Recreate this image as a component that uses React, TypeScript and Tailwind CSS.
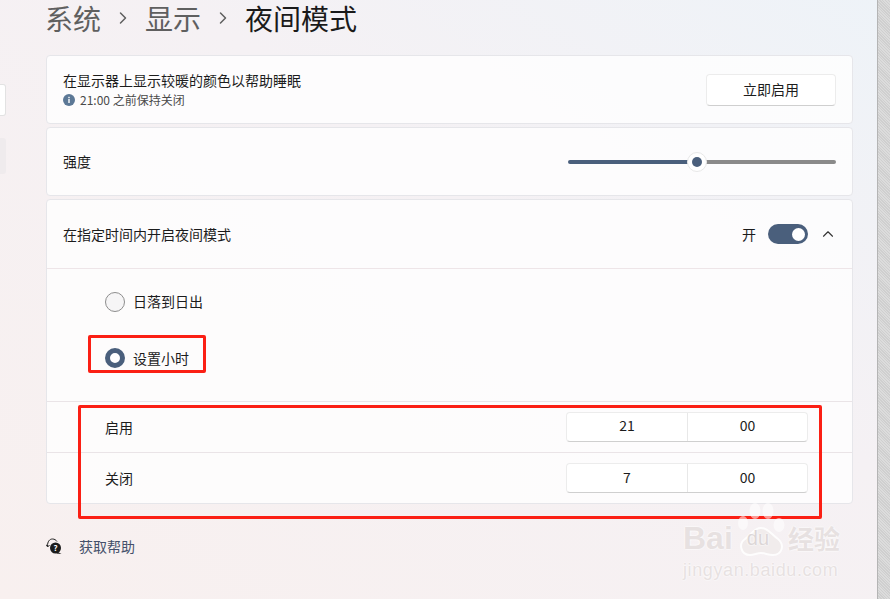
import { ChevronRight, ChevronUp } from "lucide-react"

const font = { fontFamily: '"Noto Sans CJK SC", "Liberation Sans", sans-serif' }

function TimeRow({ label, hour, minute, last }: { label: string; hour: string; minute: string; last?: boolean }) {
  return (
    <div className={`h-[51px] flex items-center justify-between pl-[58px] pr-[44px] ${last ? "" : "border-b border-[#eae4e7]"}`}>
      <span className="text-sm leading-[20px] pb-[1px] text-[#1c1c1c]">{label}</span>
      <div className="w-[242px] h-[30px] mt-[-1px] flex bg-white rounded-[4px] border border-[#ececec] border-b-[#cfcfcf] text-sm leading-[20px] text-[#1c1c1c]">
        <div className="w-[121px] pb-[3px] flex items-center justify-center border-r border-[#e8e8e8]">{hour}</div>
        <div className="flex-1 pb-[3px] flex items-center justify-center">{minute}</div>
      </div>
    </div>
  )
}

export default function App() {
  return (
    <div
      className="relative w-[890px] h-[599px] overflow-hidden flex bg-gradient-to-bl from-[#eef3f8] via-[#f5f1f4] via-40% to-[#f8f0ef]"
      style={font}
    >
      {/* Sidebar edge */}
      <div className="w-[46px] shrink-0 pt-[84px]">
        <div className="w-[6px] h-[32px] bg-white border border-l-0 border-[#e2e2e2] rounded-r-[3px]" />
        <div className="w-[6px] h-[36px] mt-[22px] bg-[#efebed] rounded-r-[3px]" />
      </div>

      <div className="w-[807px] shrink-0">
        {/* Breadcrumb */}
        <div className="h-[55px] pb-[19px] flex items-center text-[28px] leading-[36px]">
          <span className="text-[#5f5f5f] ml-[-1px]">系统</span>
          <ChevronRight className="w-[20px] h-[20px] mx-[12px] text-[#5f5f5f]" strokeWidth={1.8} />
          <span className="text-[#5f5f5f]">显示</span>
          <ChevronRight className="w-[20px] h-[20px] mx-[12px] text-[#5f5f5f]" strokeWidth={1.8} />
          <span className="text-[#1a1a1a]">夜间模式</span>
        </div>

        <div className="flex flex-col gap-[3px]">
          {/* Warm colours */}
          <div className="h-[69px] flex items-center justify-between pl-[16px] pr-[16px] bg-white/80 border border-[#e6e6ea] rounded-[4px]">
            <div>
              <div className="text-sm leading-[20px] text-[#1c1c1c]">在显示器上显示较暖的颜色以帮助睡眠</div>
              <div className="flex items-center gap-[5px] h-[20px] text-xs text-[#4a4a4a]">
                <svg width="12" height="12" viewBox="0 0 12 12">
                  <circle cx="6" cy="6" r="6" fill="#5c7896" />
                  <rect x="5.3" y="5" width="1.4" height="4" fill="#fff" />
                  <rect x="5.3" y="2.8" width="1.4" height="1.4" fill="#fff" />
                </svg>
                <span>21:00 之前保持关闭</span>
              </div>
            </div>
            <button className="w-[130px] h-[32px] pb-[1px] bg-white border border-[#ececec] border-b-[#cfcfcf] rounded-[4px] text-sm text-[#1c1c1c]">
              立即启用
            </button>
          </div>

          {/* Strength */}
          <div className="h-[69px] flex items-center justify-between pl-[16px] pr-[16px] bg-white/80 border border-[#e6e6ea] rounded-[4px]">
            <span className="text-sm leading-[20px] pb-[1px] text-[#1c1c1c]">强度</span>
            <div className="relative w-[268px] h-[4px] flex rounded-full overflow-visible">
              <div className="w-[129px] bg-[#4a5f7c] rounded-l-full" />
              <div className="flex-1 bg-[#8a8a8a] rounded-r-full" />
              <div className="absolute left-[119px] top-[-8px] w-[20px] h-[20px] rounded-full bg-white border border-[#e8e8e8] flex items-center justify-center">
                <div className="w-[10px] h-[10px] rounded-full bg-[#4a5f7c]" />
              </div>
            </div>
          </div>

          {/* Schedule */}
          <div className="h-[305px] bg-white/80 border border-[#e6e6ea] rounded-[4px]">
            <div className="h-[69px] flex items-center justify-between pl-[16px] pr-[15px] border-b border-[#eee5e8]">
              <span className="text-sm leading-[20px] text-[#1c1c1c]">在指定时间内开启夜间模式</span>
              <div className="flex items-center">
                <span className="text-sm leading-[20px] text-[#1c1c1c] mr-[12px]">开</span>
                <div className="w-[40px] h-[20px] rounded-full bg-[#4a5f7c] flex items-center justify-end pr-[3px]">
                  <div className="w-[13px] h-[13px] rounded-full bg-white" />
                </div>
                <ChevronUp className="w-[18px] h-[18px] ml-[11px] text-[#333]" strokeWidth={1.5} />
              </div>
            </div>
            <div className="h-[133px] pl-[58px] border-b border-[#eae4e7]">
              <div className="h-[66px] flex items-center gap-[8px]">
                <div className="w-[20px] h-[20px] rounded-full bg-[#f6f5f6] border border-[#8d8d8d]" />
                <span className="text-sm leading-[20px] pb-[3px] text-[#1c1c1c]">日落到日出</span>
              </div>
              <div className="h-[47px] mt-[-1px] flex items-center gap-[8px]">
                <div className="w-[20px] h-[20px] rounded-full bg-white border-[5px] border-[#4a5f7c]" />
                <span className="text-sm leading-[20px] text-[#1c1c1c]">设置小时</span>
              </div>
            </div>
            <TimeRow label="启用" hour="21" minute="00" />
            <TimeRow label="关闭" hour="7" minute="00" last />
          </div>
        </div>

        {/* Help */}
        <div className="mt-[32px] flex items-center gap-[17px]">
          <svg width="16" height="17" viewBox="0 0 16 17">
            <path d="M1.5 8 C1.5 3.5 3.5 1 6.5 1 C8.5 1 10 2 11 3.5" fill="none" stroke="#222" strokeWidth="1" />
            <path d="M0 6.5 L1.7 9 L3.5 7" fill="none" stroke="#222" strokeWidth="1" />
            <circle cx="9.5" cy="10" r="5.5" fill="#1c1c1c" />
            <path d="M12 14 L15.5 16 L10.5 15.5 Z" fill="#1c1c1c" />
            <text x="9.5" y="13" textAnchor="middle" fontSize="8" fontWeight="700" fill="#fff">?</text>
          </svg>
          <span className="text-sm leading-[20px] text-[#44506a]">获取帮助</span>
        </div>
      </div>

      {/* Right window edge */}
      <div className="ml-auto w-[13px] shrink-0 border-l border-[#b4b4b4] bg-[repeating-linear-gradient(45deg,#cfcfcf_0px,#cfcfcf_1px,#dcdcdc_1px,#dcdcdc_2px)]" />

      {/* Red annotation boxes */}
      <div className="absolute left-[88px] top-[335px] w-[118px] h-[38px] border-[3px] border-[#fb1f14] rounded-[2px]" />
      <div className="absolute left-[78px] top-[405px] w-[744px] h-[114px] border-[3px] border-[#fb1f14] rounded-[2px]" />

      {/* Watermark */}
      <div className="absolute left-[683px] top-[503px] w-[162px] leading-none" style={{ fontFamily: '"Liberation Sans", "Noto Sans CJK SC", sans-serif' }}>
        <svg className="absolute left-[55px] top-0" width="48" height="54" viewBox="0 0 48 54">
          <g fill="#ffffff" fillOpacity="0.55">
            <ellipse cx="5" cy="20" rx="5" ry="7" />
            <ellipse cx="17" cy="8" rx="5.5" ry="8" />
            <ellipse cx="30" cy="8" rx="5.5" ry="8" />
            <ellipse cx="41" cy="22" rx="5.5" ry="7" />
          </g>
          <path d="M23 25 C16 25 14 31 7 36 C0 41 3 52 12 52 C16 52 19 50 23 50 C27 50 30 52 35 52 C44 52 47 42 40 36 C33 31 30 25 23 25 Z" fill="#f1ecec" stroke="#ffffff" strokeOpacity="0.85" strokeWidth="2" />
        </svg>
        <div className="relative h-[50px] pt-[20px] flex items-center font-bold text-[#e7e1e1] [text-shadow:0_0_2px_#ffffff,0_0_2px_#ffffff]">
          <span className="text-[32px]">Bai</span>
          <span className="ml-[14px] text-[20px] font-normal text-[#dcd6d6]">du</span>
          <span className="ml-[19px] text-[26px] font-bold" style={font}>经验</span>
        </div>
        <div className="mt-[8px] text-[18px] tracking-[0.6px] text-[#e7e1e1] [text-shadow:0_0_2px_#ffffff,0_0_2px_#ffffff]">jingyan.baidu.com</div>
      </div>
    </div>
  )
}
